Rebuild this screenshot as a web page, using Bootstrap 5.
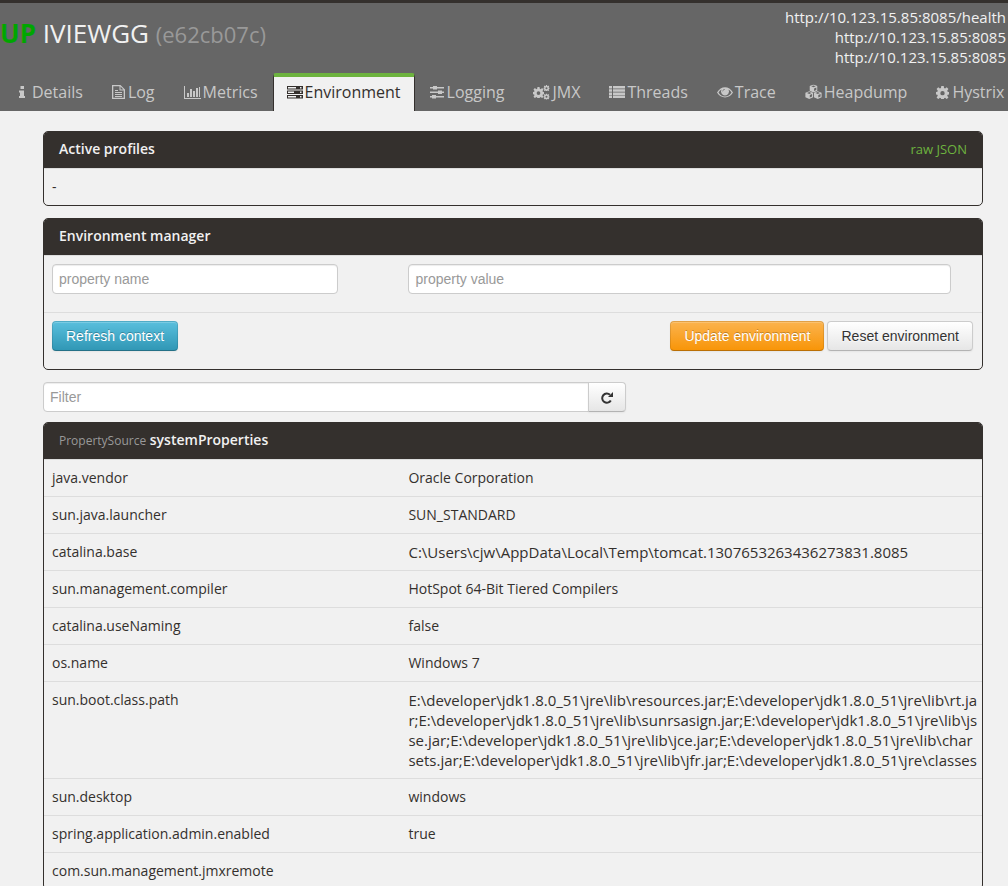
<!DOCTYPE html>
<html lang="en">
<head>
<meta charset="utf-8">
<meta name="viewport" content="width=device-width, initial-scale=1">
<title>IVIEWGG - Environment</title>
<link href="https://cdn.jsdelivr.net/npm/bootstrap@5.3.0/dist/css/bootstrap.min.css" rel="stylesheet">
<style>
body{font-family:"Open Sans","Noto Sans",sans-serif;font-size:14px;line-height:20px;color:#34302d;background:#f1f1f1}
.app-head{background:#666;border-top:3px solid #34302d}
.app-title{font-size:26px;line-height:40px;color:#f1f1f1;padding-top:10px}
.status-up{color:#00a600;font-weight:700}
.app-id{font-size:22px;color:#999}
.app-links{padding:4px 2px 6px 0;font-size:15px}
.app-links a{color:#f1f1f1;display:block}
.app-tabs{font-size:16px;padding-left:4px;gap:1px;overflow:hidden}
.app-tabs .nav-link{display:flex;align-items:center;gap:2px;color:#c8c8c8;padding:0 13px 4px;height:38px;border:solid transparent;border-width:4px 1px 0;white-space:nowrap;border-radius:3px 3px 0 0}
.app-tabs .nav-link.active{color:#34302d;background:#f1f1f1;border-color:#6db33f #34302d}
.app-tabs svg{fill:currentColor;stroke:none;flex:none}
.page-body{padding:20px 25px 0 43px}
.panel-box{border:1px solid #34302d;border-radius:5px;background:#f1f1f1;overflow:hidden;margin-bottom:12px}
.panel-title{background:#34302d;color:#f1f1f1;font-size:14px;line-height:20px;font-weight:600;padding:7px 15px 9px}
.panel-title a{color:#6db33f;font-size:13px;font-weight:400}
.panel-title small{color:#999;font-size:12px;line-height:1;font-weight:400}
.panel-row{border-top:1px solid #ddd}
.panel-cell{padding:8px}
.form-cell{padding:8px 8px 18px}
.name-col{width:38%}
.value-col{width:62%}
.props{table-layout:fixed;width:100%;margin:0}
.props td,.props th{border-top:1px solid #ddd;padding:8px;font-weight:400;vertical-align:top;white-space:nowrap}
.props .path-text{font-size:15px}
.form-control,.btn{font-family:"Liberation Sans",Arial,sans-serif;font-size:14px;line-height:20px;border-radius:4px}
.form-control{height:30px;padding:4px 6px;border-color:#ccc;box-shadow:inset 0 1px 1px #00000013}
.form-control::placeholder{color:#999}
.name-input{width:84%}
.value-input{width:96%}
.btn{padding:4px 13px;border:1px solid #0000001a;border-bottom-color:#00000040;box-shadow:inset 0 1px 0 #ffffff33,0 1px 2px #0000000d}
.btn-refresh{color:#fff;background:linear-gradient(#5bc0de,#2f96b4) border-box;text-shadow:0 -1px 0 #00000040}
.btn-update{color:#fff;background:linear-gradient(#fbb450,#f89406) border-box;text-shadow:0 -1px 0 #00000040}
.btn-plain{color:#333;background:linear-gradient(#fff,#e6e6e6);border-color:#ccc;border-bottom-color:#b3b3b3;text-shadow:0 1px 1px #ffffffbf}
.btn-pair{gap:3px;padding-right:1px}
.filter-group{width:62%;margin-bottom:10px}
.filter-group .btn{padding:4px 12px}
</style>
</head>
<body>
<svg class="d-none" aria-hidden="true"><defs>
<symbol id="gear" viewBox="0 0 16 16"><path fill-rule="evenodd" d="M6.500 0h3l.4 2.500 1.300.6 2-1.500 2.100 2.200-1.500 2 .5 1.200 2.500.4v3l-2.500.4-.5 1.200 1.500 2-2.100 2.100-2-1.500-1.300.6-.4 2.400h-3l-.4-2.400-1.300-.6-2 1.500L.7 14l1.500-2-.5-1.200L-.8 10.400v-3L1.700 7l.5-1.200-1.500-2 2.100-2.200 2 1.500 1.300-.6zM8 6.100a2.700 2.700 0 1 0 0 5.400 2.700 2.700 0 0 0 0-5.400z"/></symbol>
<symbol id="cube" viewBox="0 0 10 10"><path fill-rule="evenodd" d="M5 .2 9.800 2v5.700L5 9.900.2 7.700V2zM5 1.300 2.200 2.400l2.800 1.200 2.800-1.200zM5.700 4.900v3.200l2.800-1.300V3.700z"/></symbol>
</defs></svg>
<header class="app-head">
  <div class="d-flex justify-content-between">
    <h1 class="app-title fw-normal mb-0"><span class="status-up">UP</span> IVIEWGG <span class="app-id">(e62cb07c)</span></h1>
    <div class="app-links text-end">
      <a class="text-decoration-none" href="#health">http://10.123.15.85:8085/health</a>
      <a class="text-decoration-none" href="#management">http://10.123.15.85:8085</a>
      <a class="text-decoration-none" href="#service">http://10.123.15.85:8085</a>
    </div>
  </div>
  <nav class="app-tabs nav flex-nowrap">
    <a class="nav-link" href="#details"><svg width="12" height="16" viewBox="0 0 12 16"><path d="M2.500 2h3.500v3H2.500zM1 6.500h5V12h1v2H1v-2h1V8.500H1z"/></svg>Details</a>
    <a class="nav-link" href="#log"><svg width="14" height="16" viewBox="0 0 14 16"><path fill-rule="evenodd" d="M0 1h8.500L13 5.500V15H0zM1.300 2.300v11.400h10.400V6.500H7.500V2.300zm7.200.3v2.900h2.900zM3 6h3v1H3zm0 2h7v1H3zm0 2h7v1H3zm0 2h7v1H3z"/></svg>Log</a>
    <a class="nav-link" href="#metrics"><svg width="17" height="16" viewBox="0 0 17 16"><path d="M0 2h1v12h16v1H0zM3 9h2v4H3zm3-4h2v8H6zm3 2h2v6H9zm3-3h2v9h-2zm3-1h1v10h-1z"/></svg>Metrics</a>
    <a class="nav-link active" aria-current="page" href="#env"><svg width="16" height="16" viewBox="0 0 16 16"><path fill-rule="evenodd" d="M0 2h16v3.500H0zm0 4.500h16V10H0zM0 11h16v3.500H0zM1 3v1.500h8V3zm0 4.500V9h6V7.500zM1 12v1.500h8V12zM13 3v1.500h1.500V3zm0 4.500V9h1.500V7.500zm0 4.500v1.500h1.500V12z"/></svg>Environment</a>
    <a class="nav-link" href="#logging"><svg width="15" height="16" viewBox="0 0 15 16"><path d="M0 3h3V2h4v1h7v1.500H7v1H3v-1H0zM0 7.500h8v-1h4v1h2V9h-2v1H8V9H0zM0 12h2v-1h4v1h8v1.500H6v1H2v-1H0z"/></svg>Logging</a>
    <a class="nav-link" href="#jmx"><svg width="17" height="16" viewBox="0 0 17 16"><use href="#gear" x="0" y="3" width="11" height="11"/><use href="#gear" x="10.500" y="1" width="6" height="6"/><use href="#gear" x="10.500" y="9.500" width="6" height="6"/></svg>JMX</a>
    <a class="nav-link" href="#threads"><svg width="16" height="16" viewBox="0 0 16 16"><path d="M0 2h3v2.500H0zm4 0h12v2.500H4zM0 5.200h3v2.500H0zm4 0h12v2.500H4zM0 8.400h3v2.500H0zm4 0h12v2.500H4zM0 11.600h3V14H0zm4 0h12V14H4z"/></svg>Threads</a>
    <a class="nav-link" href="#trace"><svg width="16" height="16" viewBox="0 0 16 16"><path fill-rule="evenodd" d="M0 8.500C4 1.500 12 1.500 16 8.500 12 15 4 15 0 8.500zm1.500 0c1.500 2.400 3.800 4 6.500 4s5-1.600 6.500-4c-.8-1.300-1.800-2.300-3-3a4 4 0 1 1-7 0c-1.200.7-2.200 1.700-3 3zM6 7.500c0-1 .9-2 2-2V5C6.500 5 5.500 6 5.500 7.500z"/></svg>Trace</a>
    <a class="nav-link" href="#heapdump"><svg width="17" height="16" viewBox="0 0 18 16"><use href="#cube" x="4.500" y="0" width="9" height="8.500"/><use href="#cube" x="0" y="7" width="9" height="8.500"/><use href="#cube" x="9" y="7" width="9" height="8.500"/></svg>Heapdump</a>
    <a class="nav-link" href="#hystrix"><svg width="14" height="16" viewBox="0 0 14 16"><use href="#gear" x="0" y="2" width="13" height="13"/></svg>Hystrix</a>
  </nav>
</header>
<main class="page-body">
  <section class="panel-box">
    <h2 class="panel-title d-flex justify-content-between mb-0">Active profiles <a class="text-decoration-none" href="#raw">raw JSON</a></h2>
    <div class="panel-row panel-cell">-</div>
  </section>
  <section class="panel-box">
    <h2 class="panel-title mb-0">Environment manager</h2>
    <div class="panel-row d-flex">
      <div class="form-cell name-col"><input class="form-control name-input" type="text" placeholder="property name" aria-label="property name"></div>
      <div class="form-cell value-col"><input class="form-control value-input" type="text" placeholder="property value" aria-label="property value"></div>
    </div>
    <div class="panel-row form-cell d-flex justify-content-between">
      <button class="btn btn-refresh" type="button">Refresh context</button>
      <div class="btn-pair d-flex"><button class="btn btn-update" type="button">Update environment</button><button class="btn btn-plain" type="button">Reset environment</button></div>
    </div>
  </section>
  <div class="input-group filter-group">
    <input class="form-control" type="text" placeholder="Filter" aria-label="Filter">
    <button class="btn btn-plain" type="button" aria-label="Reload"><svg width="12" height="12" viewBox="0 0 12 12"><path d="M9.800 8.500A4.600 4.600 0 1 1 9 2.800" fill="none" stroke="#333" stroke-width="2"/><path d="M12 0v5H7z" fill="#333"/></svg></button>
  </div>
  <section class="panel-box">
    <h2 class="panel-title mb-0"><small>PropertySource</small> systemProperties</h2>
    <table class="props">
      <colgroup><col class="name-col"><col></colgroup>
      <tbody>
      <tr><th scope="row">java.vendor</th><td>Oracle Corporation</td></tr>
      <tr><th scope="row">sun.java.launcher</th><td>SUN_STANDARD</td></tr>
      <tr><th scope="row">catalina.base</th><td class="path-text">C:\Users\cjw\AppData\Local\Temp\tomcat.1307653263436273831.8085</td></tr>
      <tr><th scope="row">sun.management.compiler</th><td>HotSpot 64-Bit Tiered Compilers</td></tr>
      <tr><th scope="row">catalina.useNaming</th><td>false</td></tr>
      <tr><th scope="row">os.name</th><td>Windows 7</td></tr>
      <tr><th scope="row">sun.boot.class.path</th><td class="path-text">E:\developer\jdk1.8.0_51\jre\lib\resources.jar;E:\developer\jdk1.8.0_51\jre\lib\rt.ja<br>r;E:\developer\jdk1.8.0_51\jre\lib\sunrsasign.jar;E:\developer\jdk1.8.0_51\jre\lib\js<br>se.jar;E:\developer\jdk1.8.0_51\jre\lib\jce.jar;E:\developer\jdk1.8.0_51\jre\lib\char<br>sets.jar;E:\developer\jdk1.8.0_51\jre\lib\jfr.jar;E:\developer\jdk1.8.0_51\jre\classes</td></tr>
      <tr><th scope="row">sun.desktop</th><td>windows</td></tr>
      <tr><th scope="row">spring.application.admin.enabled</th><td>true</td></tr>
      <tr><th scope="row">com.sun.management.jmxremote</th><td></td></tr>
      </tbody>
    </table>
  </section>
</main>
<script src="https://cdn.jsdelivr.net/npm/bootstrap@5.3.0/dist/js/bootstrap.bundle.min.js"></script>
</body>
</html>
